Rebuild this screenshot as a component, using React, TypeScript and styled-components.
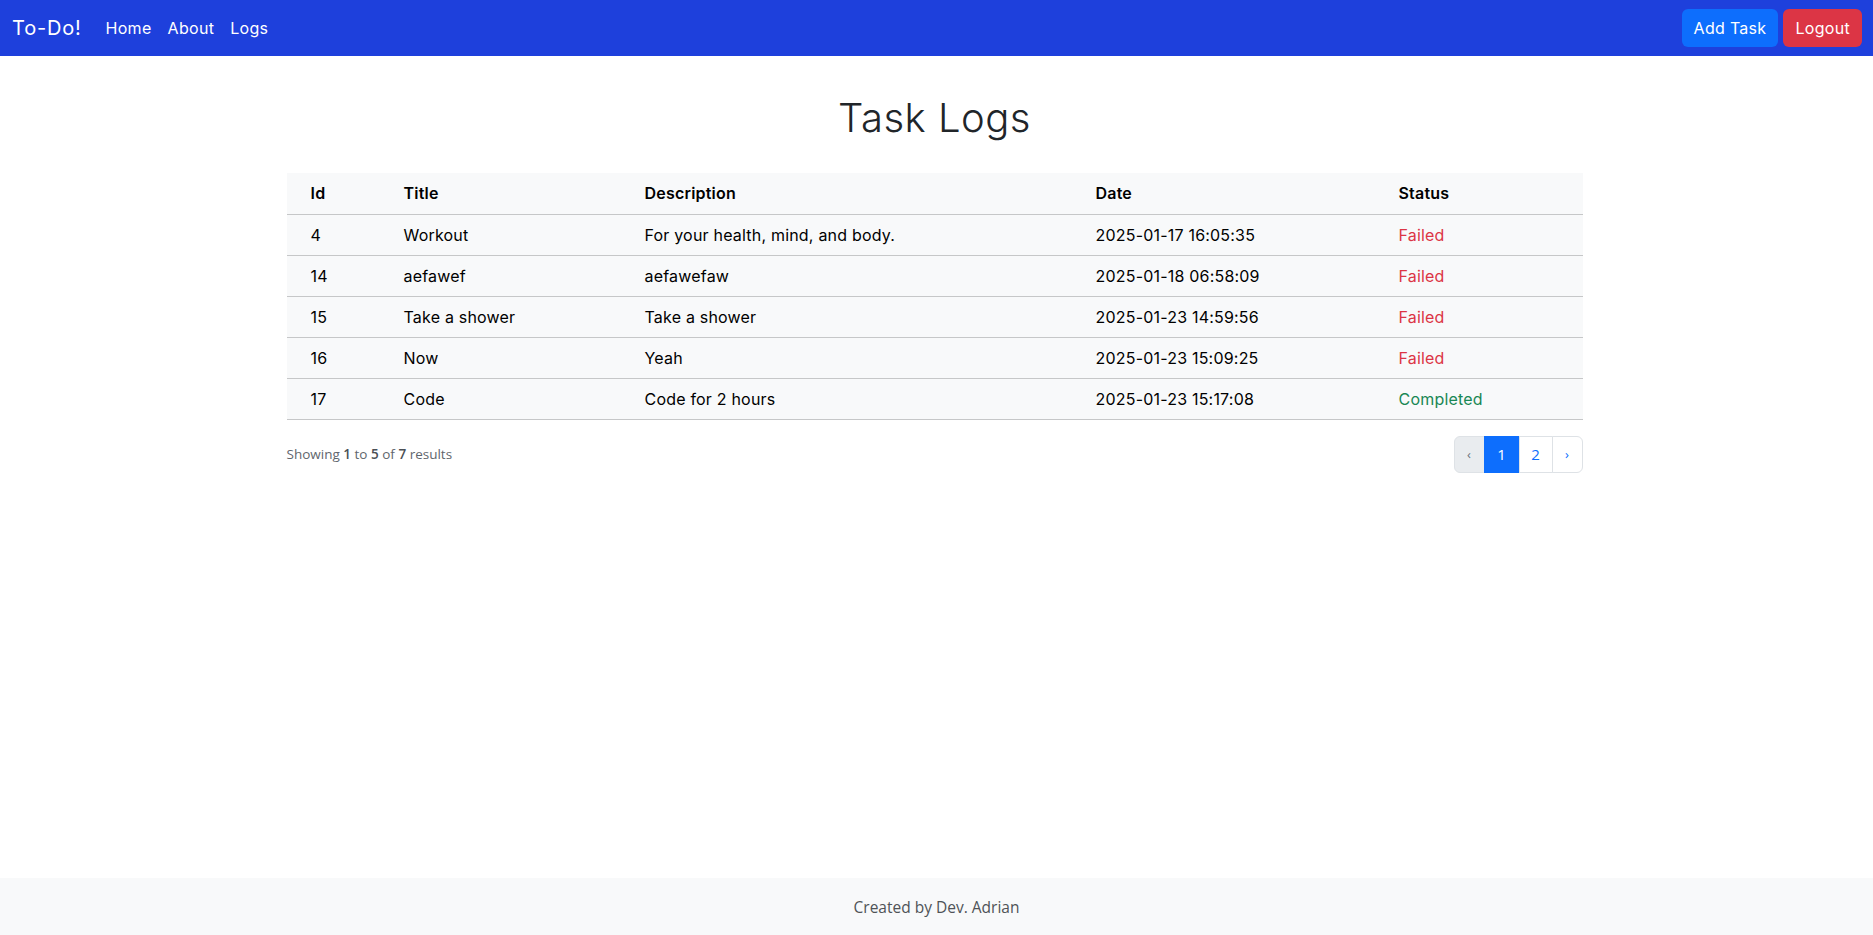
import React from "react";
import styled, { createGlobalStyle } from "styled-components";

const GlobalStyle = createGlobalStyle`
  * { box-sizing: border-box; }
  html, body { margin: 0; padding: 0; }
  body {
    font-family: Inter, "Noto Sans", sans-serif;
    color: #212529;
    background: #fff;
  }
`;

const Page = styled.div`
  min-height: 100vh;
  display: flex;
  flex-direction: column;
`;

const NavBar = styled.nav`
  height: 56px;
  background: #1e40dc;
  display: flex;
  align-items: center;
  justify-content: space-between;
  padding: 0 11px 0 12px;
`;

const NavLeft = styled.div`
  display: flex;
  align-items: center;
`;

const Brand = styled.a`
  color: #fff;
  font-size: 20px;
  letter-spacing: 0.8px;
  font-weight: 400;
  margin-right: 16px;
  text-decoration: none;
`;

const NavLink = styled.a`
  color: #fff;
  font-size: 16px;
  letter-spacing: 0.3px;
  padding: 8px;
  text-decoration: none;
`;

const NavRight = styled.div`
  display: flex;
  gap: 5px;
`;

const Button = styled.button<{ $variant: "primary" | "danger" }>`
  height: 38px;
  padding: 0 12px;
  border: none;
  border-radius: 6px;
  font-family: inherit;
  font-size: 16px;
  letter-spacing: 0.3px;
  color: #fff;
  background: ${(p) => (p.$variant === "primary" ? "#0d6efd" : "#dc3545")};
`;

const Main = styled.main`
  width: 1296px;
  margin: 0 auto;
  padding-top: 38px;
  position: relative;
  left: -2px;
`;

const Title = styled.h1`
  margin: 0 0 31px;
  text-align: center;
  font-size: 40px;
  line-height: 48px;
  font-weight: 300;
  letter-spacing: 0.5px;
  color: #212529;
`;

const Table = styled.table`
  width: 100%;
  border-collapse: collapse;
  background: #f8f9fa;
  color: #000;
  font-size: 16px;
  letter-spacing: 0.2px;
`;

const Th = styled.th<{ $w: number }>`
  width: ${(p) => p.$w}px;
  text-align: left;
  font-weight: 600;
  height: 41px;
  padding: 0 24px;
  border-bottom: 1px solid #c6c7c8;
`;

const Td = styled.td<{ $color?: string }>`
  height: 41px;
  padding: 0 24px;
  border-bottom: 1px solid #c6c7c8;
  color: ${(p) => p.$color || "#000"};
`;

const PagerRow = styled.div`
  margin-top: 16px;
  display: flex;
  align-items: center;
  justify-content: space-between;
`;

const Showing = styled.p`
  margin: 0;
  font-family: "Open Sans", "Noto Sans", sans-serif;
  font-size: 13.5px;
  color: #5f666d;
  b { font-weight: 600; color: #4a4f55; }
`;

const Pager = styled.ul`
  display: flex;
  list-style: none;
  margin: 0;
  padding: 0;
  font-family: "Open Sans", "Noto Sans", sans-serif;
`;

const PageItem = styled.li<{ $state?: "active" | "disabled"; $w: number; $small?: boolean }>`
  width: ${(p) => p.$w}px;
  height: 37px;
  display: flex;
  align-items: center;
  justify-content: center;
  font-size: ${(p) => (p.$small ? "13px" : "15px")};
  border: 1px solid #dee2e6;
  margin-left: -1px;
  color: ${(p) =>
    p.$state === "active" ? "#fff" : p.$state === "disabled" ? "#6c757d" : "#0d6efd"};
  background: ${(p) =>
    p.$state === "active" ? "#0d6efd" : p.$state === "disabled" ? "#e9ecef" : "#fff"};
  border-color: ${(p) => (p.$state === "active" ? "#0d6efd" : "#dee2e6")};
  &:first-child { margin-left: 0; border-radius: 6px 0 0 6px; }
  &:last-child { border-radius: 0 6px 6px 0; }
`;

const Footer = styled.footer`
  margin-top: auto;
  height: 57px;
  background: #f8f9fa;
  display: flex;
  align-items: center;
  justify-content: center;
  font-family: "Open Sans", "Noto Sans", sans-serif;
  font-size: 15.5px;
  font-weight: 500;
  color: #4f5357;
`;

const rows = [
  { id: 4, title: "Workout", desc: "For your health, mind, and body.", date: "2025-01-17 16:05:35", status: "Failed" },
  { id: 14, title: "aefawef", desc: "aefawefaw", date: "2025-01-18 06:58:09", status: "Failed" },
  { id: 15, title: "Take a shower", desc: "Take a shower", date: "2025-01-23 14:59:56", status: "Failed" },
  { id: 16, title: "Now", desc: "Yeah", date: "2025-01-23 15:09:25", status: "Failed" },
  { id: 17, title: "Code", desc: "Code for 2 hours", date: "2025-01-23 15:17:08", status: "Completed" },
];

export default function App() {
  return (
    <Page>
      <GlobalStyle />
      <NavBar>
        <NavLeft>
          <Brand href="#">To-Do!</Brand>
          <NavLink href="#">Home</NavLink>
          <NavLink href="#">About</NavLink>
          <NavLink href="#">Logs</NavLink>
        </NavLeft>
        <NavRight>
          <Button $variant="primary">Add Task</Button>
          <Button $variant="danger">Logout</Button>
        </NavRight>
      </NavBar>
      <Main>
        <Title>Task Logs</Title>
        <Table>
          <thead>
            <tr>
              <Th $w={93}>Id</Th>
              <Th $w={241}>Title</Th>
              <Th $w={451}>Description</Th>
              <Th $w={303}>Date</Th>
              <Th $w={208}>Status</Th>
            </tr>
          </thead>
          <tbody>
            {rows.map((r) => (
              <tr key={r.id}>
                <Td>{r.id}</Td>
                <Td>{r.title}</Td>
                <Td>{r.desc}</Td>
                <Td>{r.date}</Td>
                <Td $color={r.status === "Failed" ? "#dc3545" : "#198754"}>{r.status}</Td>
              </tr>
            ))}
          </tbody>
        </Table>
        <PagerRow>
          <Showing>
            Showing <b>1</b> to <b>5</b> of <b>7</b> results
          </Showing>
          <Pager>
            <PageItem $state="disabled" $w={31} $small>‹</PageItem>
            <PageItem $state="active" $w={36}>1</PageItem>
            <PageItem $w={34}>2</PageItem>
            <PageItem $w={31} $small>›</PageItem>
          </Pager>
        </PagerRow>
      </Main>
      <Footer>Created by Dev. Adrian</Footer>
    </Page>
  );
}
